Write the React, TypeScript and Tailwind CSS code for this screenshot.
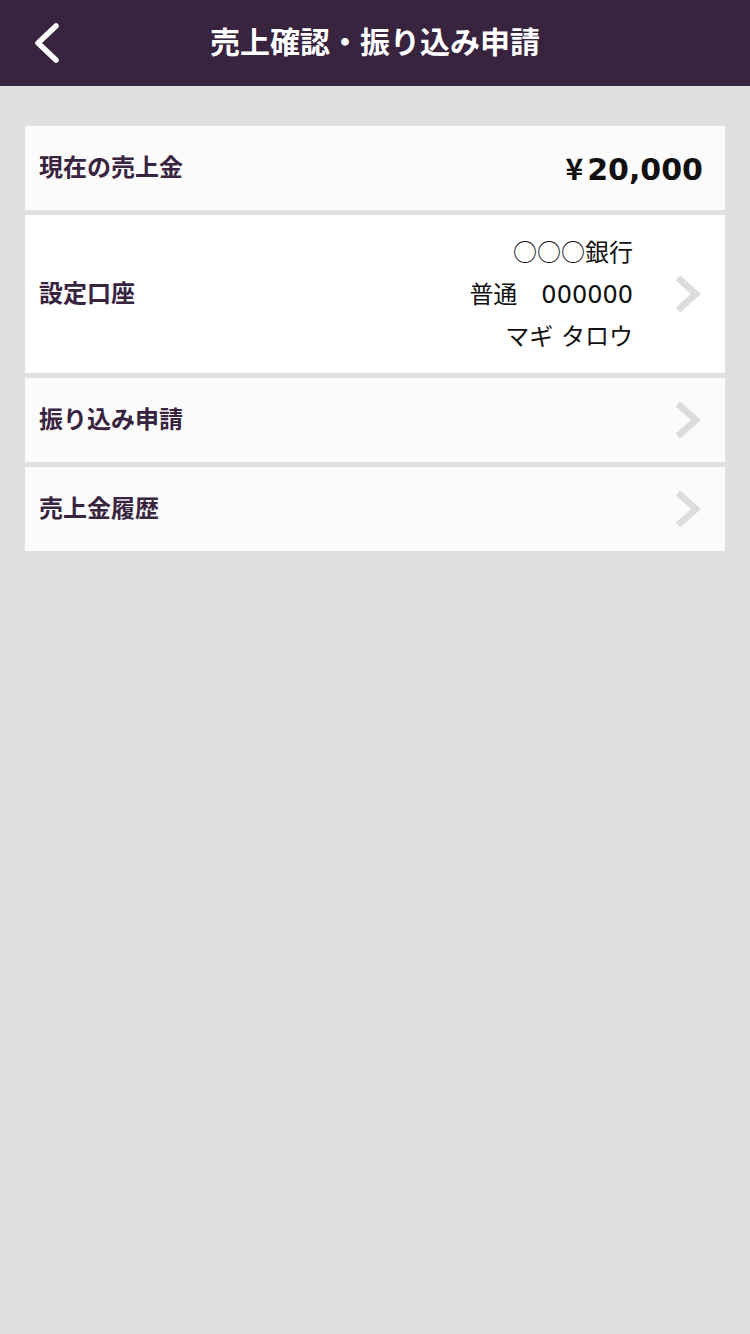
import React from "react";

const FONT = { fontFamily: '"DejaVu Sans", "Noto Sans CJK JP", sans-serif' };
const CJK = { fontFamily: '"Noto Sans CJK JP", sans-serif' };

function Chevron() {
  return (
    <svg width="28" height="38" viewBox="0 0 28 38" className="shrink-0">
      <polyline points="3,3 21,19 3,35" fill="none" stroke="#dcdcdc" strokeWidth="6.5" />
    </svg>
  );
}

function Label({ children }: { children: React.ReactNode }) {
  return <span className="text-[24px] font-bold text-[#38243f] leading-none">{children}</span>;
}

export default function App() {
  return (
    <div className="min-h-[1334px] w-[750px] bg-[#e0e0e0]" style={FONT}>
      <header className="h-[86px] bg-[#38243f] grid grid-cols-[90px_1fr_90px] items-center">
        <div className="pl-[32px] flex items-center">
          <svg width="30" height="44" viewBox="0 0 30 44">
            <polyline points="24,5 6,22 24,39" fill="none" stroke="#ffffff" strokeWidth="5.5" strokeLinecap="round" strokeLinejoin="round" />
          </svg>
        </div>
        <h1 className="text-center text-white font-bold text-[30px] leading-none">売上確認・振り込み申請</h1>
        <div />
      </header>
      <main className="pt-[40px] px-[25px] flex flex-col gap-[5px]">
        <div className="h-[84px] bg-[#fbfbfb] flex items-center justify-between pl-[14px] pr-[22px]">
          <Label>現在の売上金</Label>
          <span className="text-[30px] font-bold text-[#111111] leading-none">
            <span style={CJK} className="mr-[4px]">¥</span>20,000
          </span>
        </div>
        <div className="h-[158px] bg-white flex items-center pl-[14px] pr-[22px]">
          <Label>設定口座</Label>
          <div className="ml-auto mr-[42px] text-right text-[24px] leading-[42px] text-[#111111]">
            <div><span style={CJK}>○○○</span>銀行</div>
            <div>普通　000000</div>
            <div>マギ タロウ</div>
          </div>
          <Chevron />
        </div>
        <div className="h-[84px] bg-[#fbfbfb] flex items-center justify-between pl-[14px] pr-[22px]">
          <Label>振り込み申請</Label>
          <Chevron />
        </div>
        <div className="h-[84px] bg-[#fbfbfb] flex items-center justify-between pl-[14px] pr-[22px]">
          <Label>売上金履歴</Label>
          <Chevron />
        </div>
      </main>
    </div>
  );
}
